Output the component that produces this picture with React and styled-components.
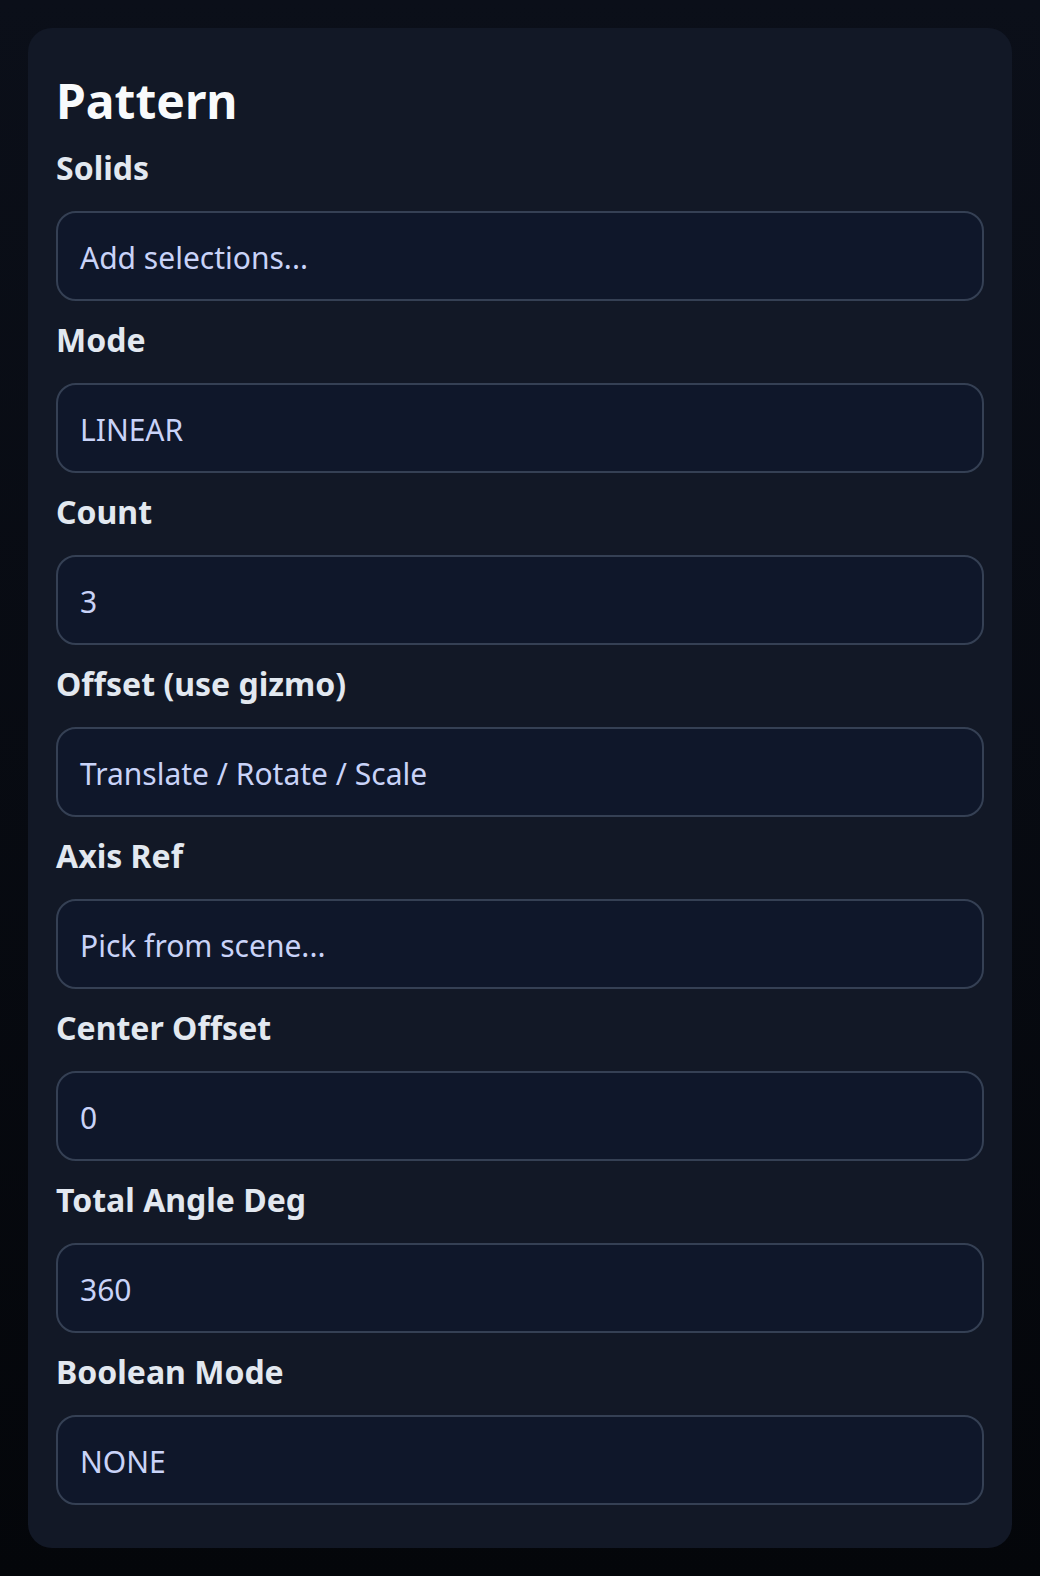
import React from "react";
import styled, { createGlobalStyle } from "styled-components";

const GlobalStyle = createGlobalStyle`
	html, body {
		margin: 0;
		padding: 0;
		min-height: 100%;
	}
	body {
		background: linear-gradient(180deg, #0b0f19 0%, #04060a 100%);
		min-height: 100vh;
		font-family: "Noto Sans", "Open Sans", sans-serif;
	}
	* {
		box-sizing: border-box;
	}
`;

const Page = styled.div`
	padding: 28px;
	min-height: 100vh;
`;

const Panel = styled.section`
	background: #121826;
	border-radius: 24px;
	padding: 44px 28px 43px;
`;

const Title = styled.h2`
	margin: 0 0 14px;
	font-size: 48px;
	line-height: 57.6px;
	font-weight: 700;
	color: #f8fafc;
`;

const FieldList = styled.div`
	display: flex;
	flex-direction: column;
	gap: 15px;
`;

const Field = styled.label`
	display: flex;
	flex-direction: column;
	gap: 19px;
`;

const Label = styled.span`
	font-size: 32px;
	line-height: 48px;
	font-weight: 700;
	color: #e2e8f0;
`;

const Input = styled.div`
	display: flex;
	align-items: center;
	height: 90px;
	padding: 3px 22px 0;
	border: 2px solid #354054;
	border-radius: 20px;
	background: #0f172a;
	font-size: 30px;
	color: #c9d3f8;
`;

const fields = [
	{ label: "Solids", value: "Add selections..." },
	{ label: "Mode", value: "LINEAR" },
	{ label: "Count", value: "3" },
	{ label: "Offset (use gizmo)", value: "Translate / Rotate / Scale" },
	{ label: "Axis Ref", value: "Pick from scene..." },
	{ label: "Center Offset", value: "0" },
	{ label: "Total Angle Deg", value: "360" },
	{ label: "Boolean Mode", value: "NONE" },
];

const App = () => (
	<>
		<GlobalStyle />
		<Page>
			<Panel>
				<Title>Pattern</Title>
				<FieldList>
					{fields.map((field) => (
						<Field key={field.label}>
							<Label>{field.label}</Label>
							<Input>{field.value}</Input>
						</Field>
					))}
				</FieldList>
			</Panel>
		</Page>
	</>
);

export default App;
